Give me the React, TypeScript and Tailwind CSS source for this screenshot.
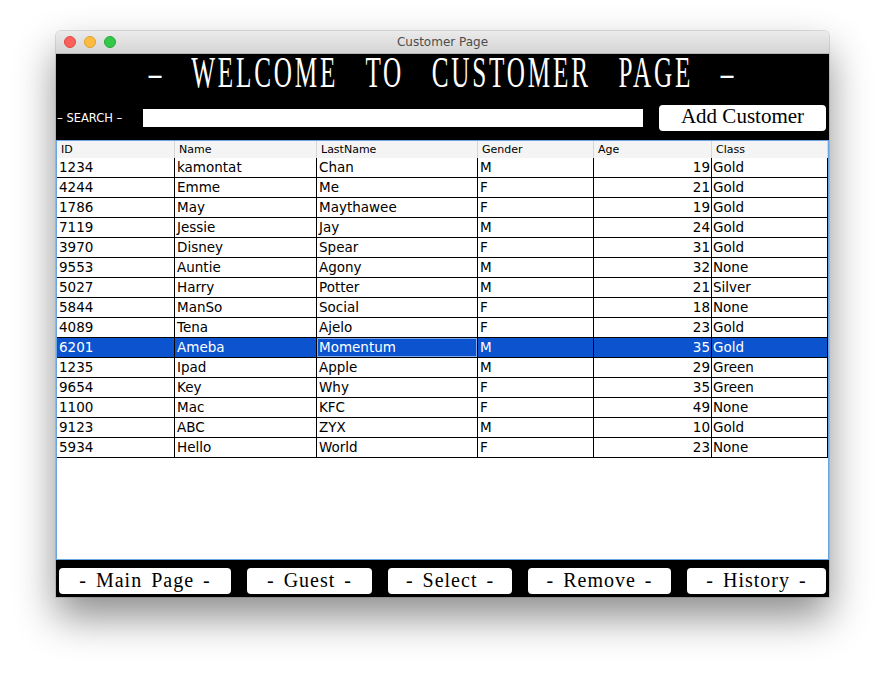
import React from 'react';

type Customer = {
  id: string;
  name: string;
  lastName: string;
  gender: string;
  age: number;
  level: string;
};

const customers: Customer[] = [
  { id: '1234', name: 'kamontat', lastName: 'Chan', gender: 'M', age: 19, level: 'Gold' },
  { id: '4244', name: 'Emme', lastName: 'Me', gender: 'F', age: 21, level: 'Gold' },
  { id: '1786', name: 'May', lastName: 'Maythawee', gender: 'F', age: 19, level: 'Gold' },
  { id: '7119', name: 'Jessie', lastName: 'Jay', gender: 'M', age: 24, level: 'Gold' },
  { id: '3970', name: 'Disney', lastName: 'Spear', gender: 'F', age: 31, level: 'Gold' },
  { id: '9553', name: 'Auntie', lastName: 'Agony', gender: 'M', age: 32, level: 'None' },
  { id: '5027', name: 'Harry', lastName: 'Potter', gender: 'M', age: 21, level: 'Silver' },
  { id: '5844', name: 'ManSo', lastName: 'Social', gender: 'F', age: 18, level: 'None' },
  { id: '4089', name: 'Tena', lastName: 'Ajelo', gender: 'F', age: 23, level: 'Gold' },
  { id: '6201', name: 'Ameba', lastName: 'Momentum', gender: 'M', age: 35, level: 'Gold' },
  { id: '1235', name: 'Ipad', lastName: 'Apple', gender: 'M', age: 29, level: 'Green' },
  { id: '9654', name: 'Key', lastName: 'Why', gender: 'F', age: 35, level: 'Green' },
  { id: '1100', name: 'Mac', lastName: 'KFC', gender: 'F', age: 49, level: 'None' },
  { id: '9123', name: 'ABC', lastName: 'ZYX', gender: 'M', age: 10, level: 'Gold' },
  { id: '5934', name: 'Hello', lastName: 'World', gender: 'F', age: 23, level: 'None' },
];

const SELECTED = '6201';

// column widths include the 1px grid line on the right
const headers = [
  { label: 'ID', w: 'w-[118px]' },
  { label: 'Name', w: 'w-[142px]' },
  { label: 'LastName', w: 'w-[161px]' },
  { label: 'Gender', w: 'w-[116px]' },
  { label: 'Age', w: 'w-[118px]' },
  { label: 'Class', w: 'flex-1' },
];

const footerButtons = [
  { label: '- Main Page -', w: 'w-[172px]' },
  { label: '- Guest -', w: 'w-[125px]' },
  { label: '- Select -', w: 'w-[124px]' },
  { label: '- Remove -', w: 'w-[143px]' },
  { label: '- History -', w: 'w-[139px]' },
];

function TitleBar() {
  return (
    <div className="relative h-[23px] flex items-center rounded-t-[5px] bg-gradient-to-b from-[#ebebeb] to-[#d5d5d5] border-b border-[#b5b5b5]">
      <div className="flex items-center gap-[8px] pl-[8px]">
        <span className="w-[12px] h-[12px] rounded-full bg-[#fc605c] border border-[#de4a43]" />
        <span className="w-[12px] h-[12px] rounded-full bg-[#fdbc40] border border-[#dea032]" />
        <span className="w-[12px] h-[12px] rounded-full bg-[#34c84a] border border-[#27aa35]" />
      </div>
      <div className="absolute inset-0 flex items-center justify-center pointer-events-none">
        <span className="text-[12px] leading-none text-[#4d4d4d] font-['DejaVu_Sans',sans-serif]">Customer Page</span>
      </div>
    </div>
  );
}

function Header() {
  return (
    <div className="bg-black">
      <div className="h-[38px] flex justify-center">
        <span className="inline-block whitespace-pre text-white text-[45px] leading-[37px] font-['Liberation_Serif',serif] scale-x-[0.56] tracking-[5px] [word-spacing:33px]">
          – WELCOME TO CUSTOMER PAGE –
        </span>
      </div>
      <div className="flex items-center pt-[13px] pb-[9px] pr-[3px]">
        <div className="w-[87px] pl-[1px] pt-[2px] text-white text-[11.5px] font-['DejaVu_Sans',sans-serif] whitespace-pre">
          – SEARCH –
        </div>
        <input
          type="text"
          className="w-[500px] h-[18px] bg-white outline-none border-0 px-1 text-[13px]"
        />
        <button className="ml-auto w-[167px] h-[26px] pb-[3px] bg-white rounded-[4px] text-black text-[21px] leading-none font-['Liberation_Serif',serif]">
          Add Customer
        </button>
      </div>
    </div>
  );
}

function Table() {
  return (
    <div className="h-[420px] border border-[#6aa6e3] bg-white overflow-hidden font-['DejaVu_Sans',sans-serif]">
      <div className="flex h-[17px] bg-[#f4f4f4]">
        {headers.map((h) => (
          <div
            key={h.label}
            className={`${h.w} border-r border-[#d6d6d6] pl-[4px] text-[11px] leading-[17px] text-black`}
          >
            {h.label}
          </div>
        ))}
      </div>
      {customers.map((c) => {
        const sel = c.id === SELECTED;
        const txt = sel ? 'text-white' : 'text-black';
        return (
          <div
            key={c.id}
            className={`flex h-[20px] border-b border-black text-[13.5px] leading-[19px] ${txt} ${sel ? 'bg-[#0b53cf]' : ''}`}
          >
            <div className="w-[118px] border-r border-black pl-[2px]">{c.id}</div>
            <div className="w-[142px] border-r border-black pl-[2px]">{c.name}</div>
            <div className="w-[161px] border-r border-black">
              <div className={`h-full pl-[1px] ${sel ? 'border border-[#86abe8] leading-[17px]' : 'pl-[2px]'}`}>
                {c.lastName}
              </div>
            </div>
            <div className="w-[116px] border-r border-black pl-[2px]">{c.gender}</div>
            <div className="w-[118px] border-r border-black pr-[1px] text-right">{c.age}</div>
            <div className="flex-1 border-r border-black pl-[1px]">{c.level}</div>
          </div>
        );
      })}
    </div>
  );
}

function Footer() {
  return (
    <div className="h-[37px] bg-black flex gap-[16px] px-[3px] pt-[8px]">
      {footerButtons.map((b) => (
        <button
          key={b.label}
          className={`${b.w} h-[26px] pb-[2px] bg-white rounded-[4px] text-black text-[20px] leading-none tracking-[1px] [word-spacing:3px] font-['Liberation_Serif',serif] whitespace-pre`}
        >
          {b.label}
        </button>
      ))}
    </div>
  );
}

export default function App() {
  return (
    <div className="w-[885px] h-[678px] bg-white pt-[31px] pl-[56px]">
      <div className="w-[773px] rounded-t-[5px] shadow-[0_20px_40px_rgba(0,0,0,0.45),0_0_0_1px_rgba(0,0,0,0.12)]">
        <TitleBar />
        <Header />
        <Table />
        <Footer />
      </div>
    </div>
  );
}
